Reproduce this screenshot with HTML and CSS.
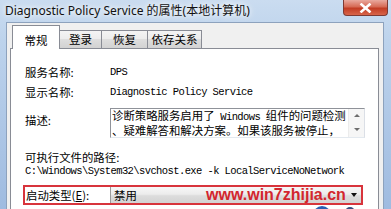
FILE: index.html
```html
<!DOCTYPE html>
<html><head><meta charset="utf-8"><link rel="stylesheet" href="styles.css"></head>
<body>
<div class="window">
  <div class="titlebar">
    <span class="title">Diagnostic Policy Service 的属性(本地计算机)</span>
    <div class="close"><svg width="13" height="10" viewBox="0 0 13 10"><path d="M2.5 1.5 L10.5 8.5 M10.5 1.5 L2.5 8.5" stroke="#fff" stroke-width="2.6" stroke-linecap="square"/></svg></div>
  </div>
  <div class="client">
    <div class="tabs">
      <div class="tab active">常规</div>
      <div class="tab">登录</div>
      <div class="tab">恢复</div>
      <div class="tab">依存关系</div>
    </div>
    <div class="panel">
      <div class="row r1"><span class="label">服务名称:</span><span class="mono">DPS</span></div>
      <div class="row r2"><span class="label">显示名称:</span><span class="mono">Diagnostic Policy Service</span></div>
      <div class="row r3"><span class="label desc-label">描述:</span>
        <div class="textbox"><div class="tb-text">诊断策略服务启用了<span class="lat"> Windows </span>组件的问题检测<br>、疑难解答和解决方案。如果该服务被停止，</div>
          <div class="scroll"><span class="arr up"></span><span class="arr down"></span></div>
        </div>
      </div>
      <div class="r4 label">可执行文件的路径:</div>
      <div class="path mono">C:\Windows\System32\svchost.exe -k LocalServiceNoNetwork</div>
      <div class="startup">
        <span class="label s-label">启动类型(<u>E</u>):</span>
        <div class="combo"><span class="combo-val">禁用</span><span class="watermark">www.win7zhijia.cn</span><span class="drop"></span></div>
      </div>
      <span class="logo-ring"></span><span class="logo-dot"></span>
    </div>
  </div>
</div>
</body></html>
```
FILE: styles.css
```css
* { box-sizing: border-box; margin: 0; padding: 0; }
html, body { width: 391px; height: 209px; overflow: hidden; }
body {
  background: linear-gradient(180deg, #cadcf0 0, #bdd3ec 40px, #9fbbe0 209px);
  font-family: "Noto Sans CJK SC", sans-serif;
  font-size: 11.4px;
  color: #000;
}
.window { display: flex; flex-direction: column; height: 209px; overflow: hidden; }
.titlebar { height: 22px; display: flex; align-items: flex-start; padding-left: 5px; padding-right: 3px; }
.title {
  flex: 1;
  font-family: "Noto Sans", "Noto Sans CJK SC", sans-serif;
  font-size: 12px;
  line-height: 22px;
  white-space: nowrap;
  color: #111;
  text-shadow: 0 0 5px #fff, 0 0 8px #fff;
}
.close {
  width: 45px; height: 16px;
  border: 1px solid #7e3a33; border-top: none;
  border-radius: 0 0 4px 4px;
  background: linear-gradient(#e9a99e, #d66a55 45%, #c23c24 55%, #d8654a);
  display: flex; align-items: center; justify-content: center;
}
.client {
  flex: 1;
  margin: 0 7px 0 6px;
  background: #f0f0f0;
  border: 1px solid #8da2bd; border-bottom: none;
  padding: 2px 4px 0 3px;
  display: flex; flex-direction: column;
  min-height: 0;
}
.tabs { display: flex; align-items: flex-end; height: 24px; padding-left: 2px; position: relative; z-index: 1; margin-bottom: -1px; }
.tab {
  height: 18px; margin-bottom: 1px;
  border: 1px solid #898c95; border-bottom: none; border-left: none;
  background: linear-gradient(#f4f4f4, #ececec 50%, #dedede 50%, #d2d2d2);
  font-size: 11.5px; line-height: 17px; text-align: center;
}
.tab:nth-child(1) { width: 48px; }
.tab:nth-child(2) { width: 42px; }
.tab:nth-child(3) { width: 46px; }
.tab:nth-child(4) { width: 54px; }
.tab.active { height: 24px; margin-bottom: 0; border-left: 1px solid #898c95; background: #fff; padding-top: 7px; line-height: 14px; }
.panel {
  flex: 1; position: relative; overflow: hidden; min-height: 0;
  background: #fff;
  border: 1px solid #898c95; border-bottom: none;
  padding: 16px 0 0 14px;
}
.row { display: grid; grid-template-columns: 85px auto; align-items: start; line-height: 14px; }
.label { line-height: 14px; white-space: nowrap; }
.mono, .lat {
  font-family: "Liberation Mono", monospace;
  font-size: 10.5px;
  letter-spacing: -0.6px;
  white-space: pre;
}
.mono { line-height: 14px; }
.r2 { margin-top: 6px; }
.r3 { margin-top: 9px; }
.desc-label { padding-top: 5px; }
.textbox {
  width: 255px; height: 30px;
  border: 1px solid #8f9299;
  border-right-color: #dbdfe6; border-bottom-color: #e3e9ef;
  display: flex; justify-content: space-between;
  background: #fff;
}
.tb-text { padding-left: 1px; line-height: 13px; white-space: nowrap; font-size: 11.4px; }
.scroll {
  width: 16px; height: 28px;
  background: #f6f6f6;
  border-left: 1px solid #ececec;
  display: flex; flex-direction: column; align-items: center; justify-content: space-between;
  padding: 5px 0 6px;
}
.arr { width: 0; height: 0; border-left: 3px solid transparent; border-right: 3px solid transparent; }
.arr.up { border-bottom: 3px solid #6d6d6d; }
.arr.down { border-top: 3px solid #6d6d6d; }
.r4 { margin-top: 12px; display: block; }
.path { display: block; }
.startup {
  margin-top: 7px; margin-left: -2px;
  width: 340px; height: 20px;
  border: 2px solid #d8343c;
  display: flex; align-items: stretch;
}
.s-label { width: 85px; padding-left: 1px; line-height: 16px; }
.s-label u { text-decoration: underline; }
.combo {
  flex: 1; position: relative;
  border-left: 1px solid #9a9a9a;
  background: linear-gradient(#f7f7f7, #ececec 45%, #dcdcdc 55%, #d3d3d3);
  line-height: 16px;
  padding-left: 3px;
}
.watermark {
  position: absolute; left: 95px; top: -2px;
  font-family: "Liberation Sans", Arial, sans-serif;
  font-weight: bold; font-size: 16px; line-height: 20px;
  color: #d3262e;
}
.drop {
  position: absolute; right: 4px; top: 6px;
  width: 0; height: 0;
  border-left: 3.5px solid transparent; border-right: 3.5px solid transparent;
  border-top: 4px solid #111;
}
.logo-ring {
  position: absolute; left: 302px; top: 157px;
  width: 18px; height: 18px; border-radius: 50%;
  border: 3px solid #2c5fb4;
}
.logo-dot {
  position: absolute; left: 334px; top: 158px;
  width: 10px; height: 10px; border-radius: 50%;
  background: #3a4d80;
}
```
